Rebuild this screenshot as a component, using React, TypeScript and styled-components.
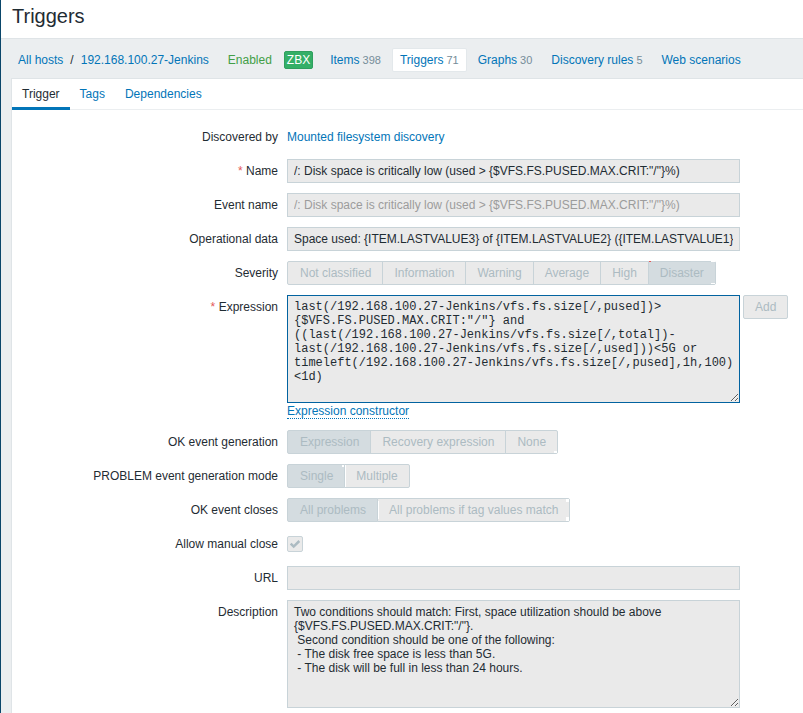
import React from "react";
import styled, { createGlobalStyle, css } from "styled-components";

const GlobalStyle = createGlobalStyle`
  *, *::before, *::after { box-sizing: border-box; }
  body {
    margin: 0;
    background: #fff;
    color: #1f2c33;
    font-family: "Liberation Sans", Arial, sans-serif;
    font-size: 12px;
    line-height: 14px;
  }
`;

const Page = styled.div`
  display: flex;
  flex-direction: column;
  min-height: 100vh;
  border-left: 1px solid #0a466a;
  background: #ebeef0;
`;

const Header = styled.header`
  padding: 4px 11px 10px;
  background: #fff;
  border-bottom: 1px solid #dfe4e7;
`;

const Title = styled.h1`
  margin: 0;
  font-size: 20px;
  font-weight: 400;
  line-height: 24px;
`;

const Link = styled.a`
  color: #0275b8;
  text-decoration: none;
`;

const HostNav = styled.nav`
  display: flex;
  align-items: center;
  gap: 5px;
  height: 39px;
  padding: 3px 10px 0;
  white-space: nowrap;
`;

const NavLink = styled(Link)<{ $selected?: boolean }>`
  padding: 4px 7px;
  ${(p) =>
    p.$selected &&
    css`
      background: #fff;
      box-shadow: 0 0 0 1px #e3e8eb;
      border-radius: 1px;
    `}
`;

const Count = styled.span`
  margin-left: 3px;
  color: #768d99;
  font-size: 11px;
`;

const Breadcrumb = styled.span`
  display: flex;
  gap: 7px;
  padding: 0 7px;
`;

const Status = styled.span`
  padding: 0 7px;
  color: #429e47;
`;

const Badge = styled.span`
  margin-right: 5px;
  padding: 1px 2px;
  border: 1px solid #2f9f5e;
  border-radius: 2px;
  background: #34af67;
  color: #fff;
`;

const Panel = styled.main`
  flex: 1;
  margin-left: 10px;
  border: solid #dfe4e7;
  border-width: 1px 0 0 1px;
  background: #fff;
`;

const Tabs = styled.nav`
  display: flex;
  box-shadow: inset 0 -1px #ebeef0;
`;

const Tab = styled(Link)<{ $active?: boolean }>`
  height: 31px;
  padding: 0 10px;
  line-height: 30px;
  ${(p) =>
    p.$active &&
    css`
      color: #1f2c33;
      box-shadow: inset 0 -3px #0275b8;
    `}
`;

const Form = styled.form`
  display: flex;
  flex-direction: column;
  gap: 10px;
  padding: 15px 10px 5px 0;
`;

const Row = styled.div`
  display: grid;
  grid-template-columns: 266px minmax(0, 1fr);
  column-gap: 9px;
  min-height: 24px;
  line-height: 24px;
`;

const Caption = styled.label<{ $required?: boolean }>`
  text-align: right;
  ${(p) =>
    p.$required &&
    css`
      &::before {
        content: "* ";
        color: #e45959;
      }
    `}
`;

const Field = styled.div`
  display: flex;
  align-items: flex-start;
  gap: 3px;
`;

const box = css`
  display: block;
  width: 453px;
  max-width: 100%;
  margin: 0;
  border: 1px solid #c8d3d8;
  border-radius: 0;
  background: #eaeaea;
  color: #1f2c33;
  font-family: inherit;
  font-size: 12px;
  line-height: 14px;
  outline: none;
`;

const TextInput = styled.input`
  ${box}
  height: 24px;
  padding: 0 6px;
  &::placeholder {
    color: #9c9c9c;
    opacity: 1;
  }
`;

const TextArea = styled.textarea<{ $code?: boolean }>`
  ${box}
  height: 108px;
  padding: 4px 4px 4px 6px;
  overflow: hidden;
  resize: both;
  ${(p) =>
    p.$code &&
    css`
      border-color: #0263a0;
      font-family: "Liberation Mono", "Courier New", monospace;
    `}
`;

const ExpressionBox = styled.div`
  width: 453px;
  min-width: 0;
  padding-bottom: 1px;
`;

const DottedButton = styled.button`
  display: block;
  margin: 1px 0 0;
  padding: 0;
  border: 0;
  border-bottom: 1px dotted #0275b8;
  background: none;
  color: #0275b8;
  font: inherit;
  line-height: 14px;
`;

const AddButton = styled.button`
  height: 24px;
  padding: 0 11px;
  border: 1px solid #c8d3d8;
  border-radius: 2px;
  background: #eaeaea;
  color: #acbbc2;
  font: inherit;
  line-height: 22px;
`;

const Segments = styled.div`
  display: flex;
  white-space: nowrap;
`;

type Mark = "cornersHigh" | "endLow" | "endHigh" | "startLine" | "startLineCorners";

const white = "linear-gradient(#fff, #fff)";
const red = "linear-gradient(#e45959, #e45959)";
const marks: Record<Mark, string> = {
  cornersHigh: `${red} left 1px top 0 / 2px 1px no-repeat, ${white} right 1px top 0 / 4px 1px no-repeat, ${white} right 1px bottom 1px / 4px 1px no-repeat`,
  endLow: `${white} right 1px bottom 1px / 3px 2px no-repeat`,
  endHigh: `${white} right 1px top 1px / 2px 2px no-repeat`,
  startLine: `${white} left 1px top 1px / 1px 22px no-repeat`,
  startLineCorners: `${white} left 1px center / 1px 18px no-repeat, ${white} right 1px top 1px / 3px 3px no-repeat, ${white} right 1px bottom 1px / 3px 4px no-repeat`,
};

const Segment = styled.label<{ $mark?: Mark }>`
  position: relative;
  height: 24px;
  padding: 0 11px;
  border: 1px solid #c8d3d8;
  background: #eaeaea;
  color: #acbbc2;
  line-height: 22px;
  & + & {
    margin-left: -1px;
  }
  &:first-child {
    padding-left: 12px;
    border-radius: 2px 0 0 2px;
  }
  &:last-child {
    border-radius: 0 2px 2px 0;
  }
  &:has(input:checked) {
    background: #d4dce0;
  }
  ${(p) =>
    p.$mark &&
    css`
      &::after {
        content: "";
        position: absolute;
        inset: -1px;
        background: ${marks[p.$mark]};
        pointer-events: none;
      }
    `}
`;

const HiddenRadio = styled.input`
  position: absolute;
  inset: 0;
  margin: 0;
  opacity: 0;
`;

const CheckWrap = styled.span`
  display: grid;
  margin-top: 4px;
  & > * {
    grid-area: 1 / 1;
  }
`;

const Checkbox = styled.input`
  appearance: none;
  width: 16px;
  height: 16px;
  margin: 0;
  border: 1px solid #c8d3d8;
  border-radius: 2px;
  background: #eaeaea;
`;

const CheckMark = styled.svg`
  width: 16px;
  height: 16px;
  pointer-events: none;
`;

type Option = { text: string; mark?: Mark };

function RadioGroup(props: { name: string; label: string; options: Option[]; selected: string }) {
  const labelId = `${props.name}-label`;
  return (
    <Row>
      <Caption as="span" id={labelId}>{props.label}</Caption>
      <Segments role="radiogroup" aria-labelledby={labelId}>
        {props.options.map((o) => (
          <Segment key={o.text} $mark={o.mark}>
            <HiddenRadio type="radio" name={props.name} disabled defaultChecked={o.text === props.selected} />
            {o.text}
          </Segment>
        ))}
      </Segments>
    </Row>
  );
}

function TextRow(props: {
  id: string;
  label: string;
  value?: string;
  placeholder?: string;
  required?: boolean;
}) {
  return (
    <Row>
      <Caption htmlFor={props.id} $required={props.required}>{props.label}</Caption>
      <TextInput id={props.id} type="text" readOnly defaultValue={props.value} placeholder={props.placeholder} />
    </Row>
  );
}

const problemName = '/: Disk space is critically low (used > {$VFS.FS.PUSED.MAX.CRIT:"/"}%)';

const expression = `last(/192.168.100.27-Jenkins/vfs.fs.size[/,pused])>
{$VFS.FS.PUSED.MAX.CRIT:"/"} and
((last(/192.168.100.27-Jenkins/vfs.fs.size[/,total])-
last(/192.168.100.27-Jenkins/vfs.fs.size[/,used]))<5G or
timeleft(/192.168.100.27-Jenkins/vfs.fs.size[/,pused],1h,100)
<1d)`;

const description = `Two conditions should match: First, space utilization should be above
{$VFS.FS.PUSED.MAX.CRIT:"/"}.
 Second condition should be one of the following:
 - The disk free space is less than 5G.
 - The disk will be full in less than 24 hours.`;

export default function App() {
  return (
    <>
      <GlobalStyle />
      <Page>
        <Header>
          <Title>Triggers</Title>
        </Header>
        <HostNav aria-label="Host">
          <Breadcrumb>
            <Link href="#hosts">All hosts</Link>
            <span>/</span>
            <Link href="#host">192.168.100.27-Jenkins</Link>
          </Breadcrumb>
          <Status>Enabled</Status>
          <Badge>ZBX</Badge>
          <NavLink href="#items">Items<Count>398</Count></NavLink>
          <NavLink href="#triggers" $selected>Triggers<Count>71</Count></NavLink>
          <NavLink href="#graphs">Graphs<Count>30</Count></NavLink>
          <NavLink href="#discovery">Discovery rules<Count>5</Count></NavLink>
          <NavLink href="#web">Web scenarios</NavLink>
        </HostNav>
        <Panel>
          <Tabs aria-label="Trigger sections">
            <Tab href="#trigger" $active>Trigger</Tab>
            <Tab href="#tags">Tags</Tab>
            <Tab href="#dependencies">Dependencies</Tab>
          </Tabs>
          <Form>
            <Row>
              <Caption as="span">Discovered by</Caption>
              <Field>
                <Link href="#rule">Mounted filesystem discovery</Link>
              </Field>
            </Row>
            <TextRow id="name" label="Name" required value={problemName} />
            <TextRow id="event-name" label="Event name" placeholder={problemName} />
            <TextRow
              id="opdata"
              label="Operational data"
              value="Space used: {ITEM.LASTVALUE3} of {ITEM.LASTVALUE2} ({ITEM.LASTVALUE1})"
            />
            <RadioGroup
              name="severity"
              label="Severity"
              selected="Disaster"
              options={[
                { text: "Not classified" },
                { text: "Information" },
                { text: "Warning" },
                { text: "Average" },
                { text: "High" },
                { text: "Disaster", mark: "cornersHigh" },
              ]}
            />
            <Row>
              <Caption htmlFor="expression" $required>Expression</Caption>
              <Field>
                <ExpressionBox>
                  <TextArea id="expression" $code readOnly spellCheck={false} defaultValue={expression} />
                  <DottedButton type="button">Expression constructor</DottedButton>
                </ExpressionBox>
                <AddButton type="button" disabled>Add</AddButton>
              </Field>
            </Row>
            <RadioGroup
              name="recovery"
              label="OK event generation"
              selected="Expression"
              options={[{ text: "Expression" }, { text: "Recovery expression" }, { text: "None", mark: "endLow" }]}
            />
            <RadioGroup
              name="mode"
              label="PROBLEM event generation mode"
              selected="Single"
              options={[{ text: "Single", mark: "endHigh" }, { text: "Multiple", mark: "startLine" }]}
            />
            <RadioGroup
              name="closes"
              label="OK event closes"
              selected="All problems"
              options={[
                { text: "All problems" },
                { text: "All problems if tag values match", mark: "startLineCorners" },
              ]}
            />
            <Row>
              <Caption htmlFor="manual-close">Allow manual close</Caption>
              <Field>
                <CheckWrap>
                  <Checkbox id="manual-close" type="checkbox" disabled defaultChecked />
                  <CheckMark viewBox="0 0 16 16" aria-hidden="true">
                    <path d="M3.7 7.6 L6.7 10.6 L12.3 5" fill="none" stroke="#acbbc2" strokeWidth="2.5" />
                  </CheckMark>
                </CheckWrap>
              </Field>
            </Row>
            <TextRow id="url" label="URL" />
            <Row>
              <Caption htmlFor="description">Description</Caption>
              <TextArea id="description" readOnly spellCheck={false} defaultValue={description} />
            </Row>
          </Form>
        </Panel>
      </Page>
    </>
  );
}
